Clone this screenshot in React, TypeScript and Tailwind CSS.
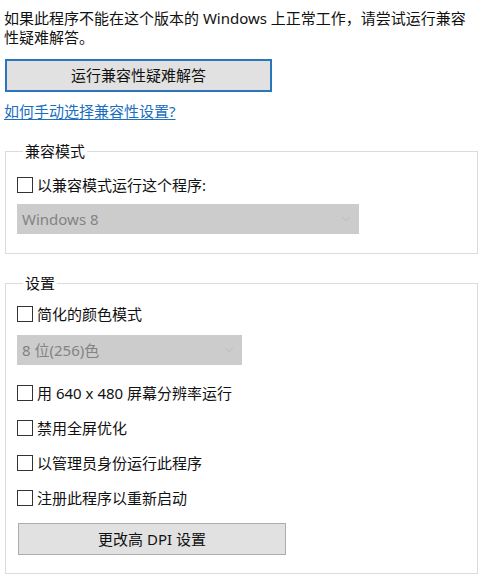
import { ChevronDown } from 'lucide-react'

function Check({ label }: { label: string }) {
  return (
    <label className="flex items-center h-[20px] gap-[4px]">
      <span className="w-[16px] h-[16px] border border-[#333333] bg-white shrink-0" />
      <span>{label}</span>
    </label>
  )
}

function Dropdown({ value, width }: { value: string; width: string }) {
  return (
    <div className={`${width} h-[30px] bg-[#cccccc] flex items-center justify-between pl-[5px] pr-[6px] text-[#838383]`}>
      <span>{value}</span>
      <ChevronDown size={14} strokeWidth={1.2} className="text-[#b3b3b3]" />
    </div>
  )
}

export default function App() {
  return (
    <div
      className="w-[495px] h-[582px] bg-white text-[15px] leading-[19px] text-[#111111] overflow-hidden"
      style={{ fontFamily: '"Noto Sans", "Noto Sans CJK SC", sans-serif' }}
    >
      <p className="pt-[9px] pl-[4px] pr-[20px]">
        如果此程序不能在这个版本的 Windows 上正常工作，请尝试运行兼容性疑难解答。
      </p>

      <button className="ml-[5px] mt-[12px] w-[267px] h-[33px] border-2 border-[#2a76bd] bg-[#e1e1e1] flex items-center justify-center">
        运行兼容性疑难解答
      </button>

      <a className="block ml-[4px] mt-[10px] w-fit text-[#1a6fc0] underline underline-offset-2">
        如何手动选择兼容性设置?
      </a>

      {/* 兼容模式 */}
      <fieldset className="ml-[5px] mt-[21px] w-[473px] border border-[#dcdcdc] pl-[11px] pb-[19px]">
        <legend className="ml-[6px] px-[2px]">兼容模式</legend>
        <div className="mt-[14px]">
          <Check label="以兼容模式运行这个程序:" />
        </div>
        <div className="mt-[9px]">
          <Dropdown value="Windows 8" width="w-[342px]" />
        </div>
      </fieldset>

      {/* 设置 */}
      <fieldset className="ml-[5px] mt-[20px] w-[473px] border border-[#dcdcdc] pl-[11px] pb-[18px]">
        <legend className="ml-[6px] px-[2px]">设置</legend>
        <div className="mt-[11px]">
          <Check label="简化的颜色模式" />
        </div>
        <div className="mt-[11px]">
          <Dropdown value="8 位(256)色" width="w-[225px]" />
        </div>
        <div className="mt-[18px] flex flex-col gap-[15px]">
          <Check label="用 640 x 480 屏幕分辨率运行" />
          <Check label="禁用全屏优化" />
          <Check label="以管理员身份运行此程序" />
          <Check label="注册此程序以重新启动" />
        </div>
        <button className="mt-[15px] ml-[1px] w-[268px] h-[32px] border border-[#adadad] bg-[#e1e1e1] flex items-center justify-center">
          更改高 DPI 设置
        </button>
      </fieldset>
    </div>
  )
}
